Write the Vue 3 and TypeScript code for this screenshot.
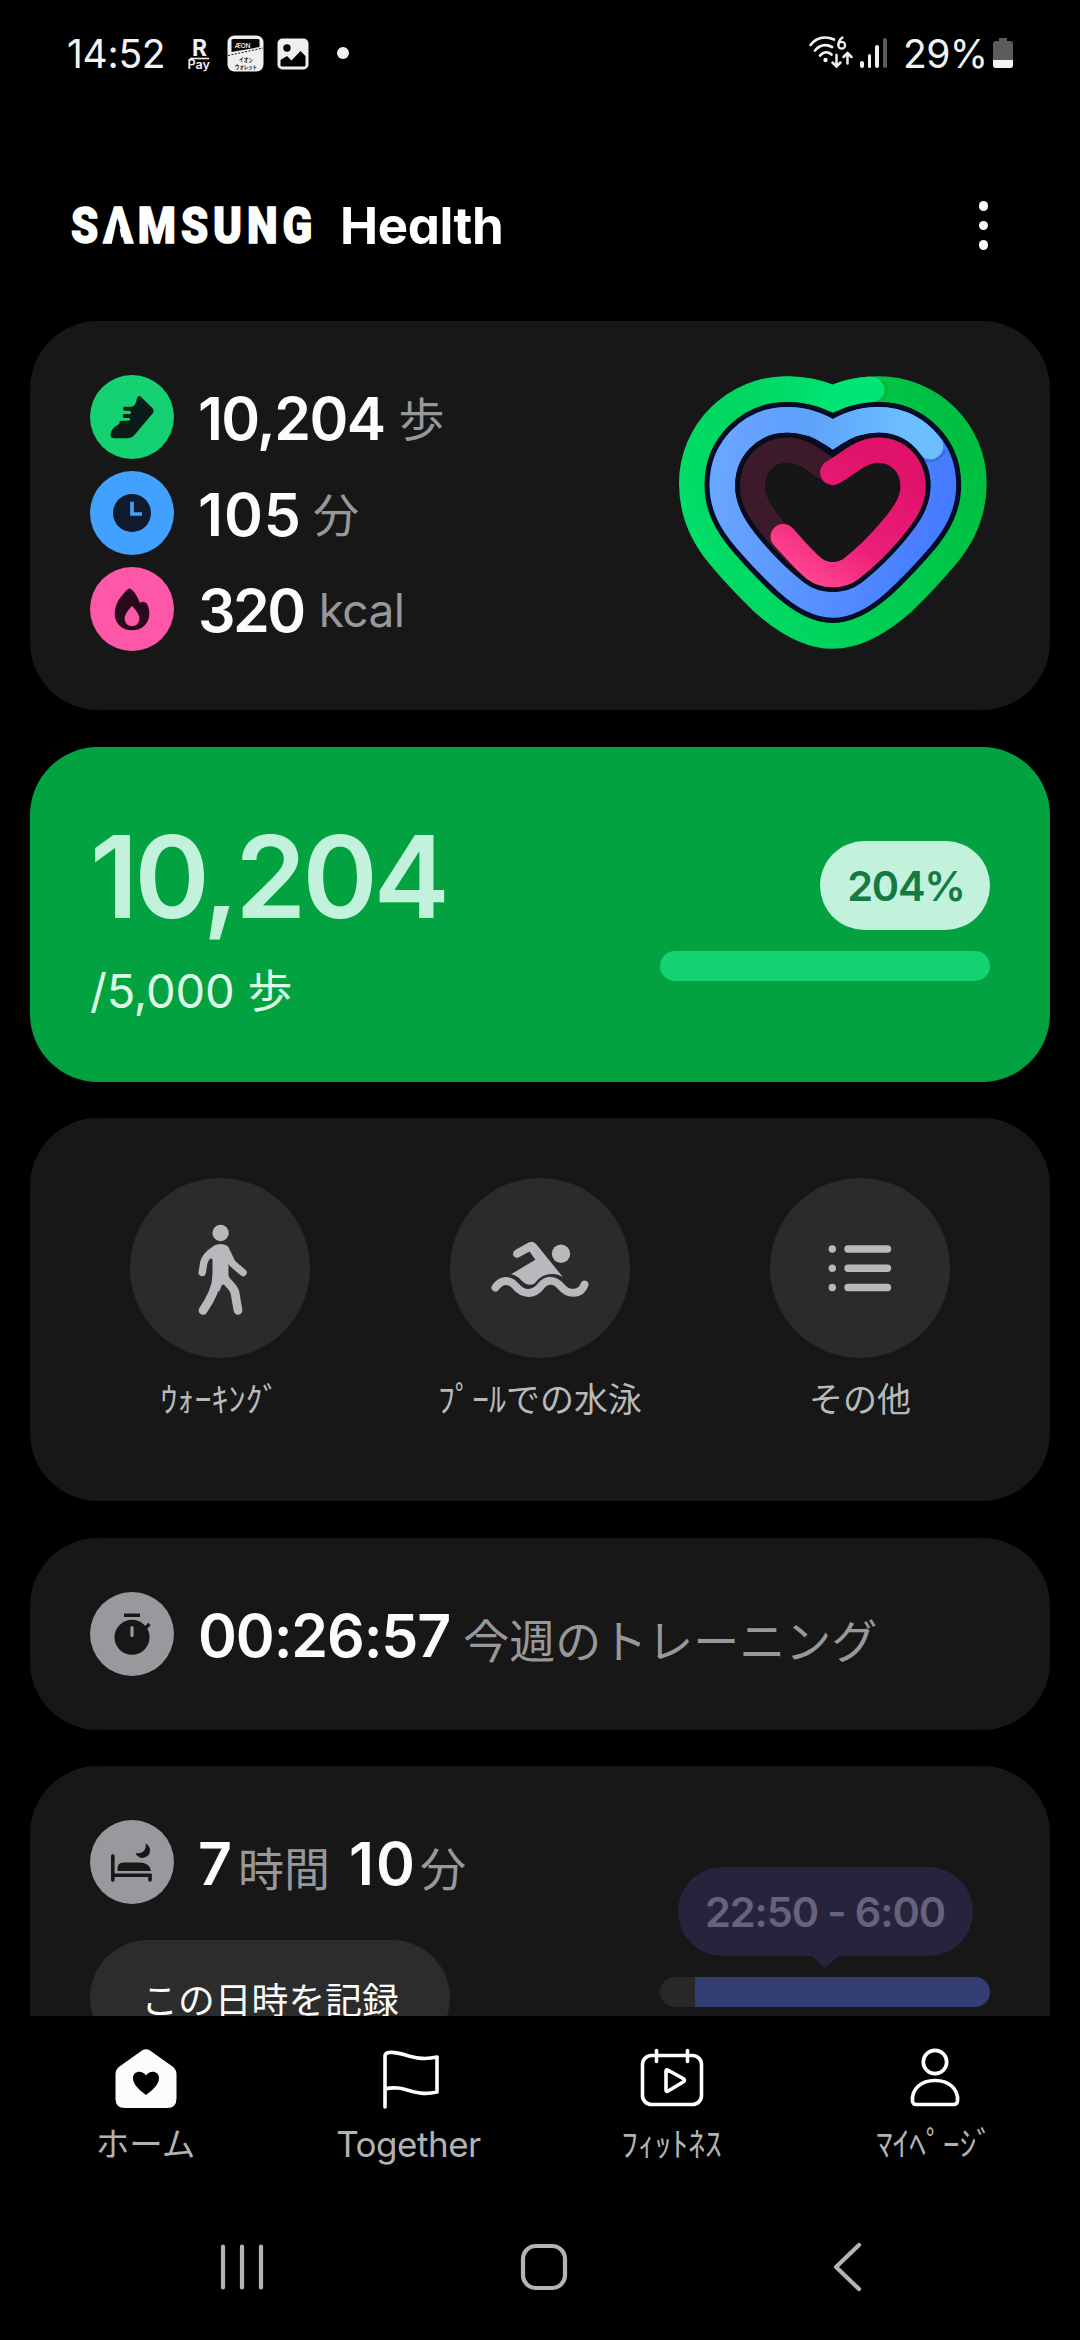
<script setup lang="ts">
interface Stat {
  kind: 'steps' | 'time' | 'energy'
  value: string
  unit: string
}

interface Item {
  kind: string
  label: string
}

const stats: Stat[] = [
  { kind: 'steps', value: '10,204', unit: '歩' },
  { kind: 'time', value: '105', unit: '分' },
  { kind: 'energy', value: '320', unit: 'kcal' },
]

const exercises: Item[] = [
  { kind: 'walk', label: 'ｳｫｰｷﾝｸﾞ' },
  { kind: 'swim', label: 'ﾌﾟｰﾙでの水泳' },
  { kind: 'more', label: 'その他' },
]

const tabs: Item[] = [
  { kind: 'home', label: 'ホーム' },
  { kind: 'together', label: 'Together' },
  { kind: 'fitness', label: 'ﾌｨｯﾄﾈｽ' },
  { kind: 'me', label: 'ﾏｲﾍﾟｰｼﾞ' },
]

const signalBars: number[] = [7, 14, 23, 30]

const greenPath =
  'M547 175 C590 157 634 147 684 147 C844 147 970 275 970 430 C970 510 939 585 889 645 C850 692 805 740 759 785 C684 852 614 888 547 888 C480 888 410 852 335 785 C289 740 244 692 205 645 C155 585 124 510 124 430 C124 275 250 147 410 147 C460 147 504 157 547 175 Z'
const bluePath =
  'M547 282 C587 255 634 239 684 239 C792 239 879 325 879 435 C879 500 849 550 809 597 C764 650 724 690 684 727 C639 768 594 795 547 795 C500 795 455 768 410 727 C370 690 330 650 285 597 C245 550 215 500 215 435 C215 325 302 239 410 239 C460 239 507 255 547 282 Z'
const pinkTrack =
  'M547 397 C575 381 598 363 625 347 C645 336 662 330 684 330 C745 330 788 378 788 440 C788 485 760 525 722 570 C684 615 640 657 602 687 C578 705 560 704 547 704 C534 704 516 705 492 687 C454 657 410 615 372 570 C334 525 306 485 306 440 C306 378 349 330 410 330 C432 330 449 336 469 347 C496 363 519 381 547 397 Z'
const pinkArc =
  'M547 397 C575 381 598 363 625 347 C645 336 662 330 684 330 C745 330 788 378 788 440 C788 485 760 525 722 570 C684 615 640 657 602 687 C578 705 560 704 547 704 C534 704 516 705 492 687 C460 661 430 624 398 590'
</script>

<template>
  <div class="screen">
    <header class="status">
      <span class="clock">14:52</span>
      <svg class="ic-pay" width="26" height="36" viewBox="0 0 26 36">
        <text x="6" y="18.5" class="pay-r" textLength="15" lengthAdjust="spacingAndGlyphs">R</text>
        <path d="M4 21.5h19" stroke="#f0f0f0" stroke-width="1.6" />
        <text x="1.4" y="32.4" class="pay-t" textLength="22.5" lengthAdjust="spacingAndGlyphs">Pay</text>
      </svg>
      <svg class="ic-aeon" width="37" height="37" viewBox="0 0 37 37">
        <rect x=".5" y=".5" width="36" height="36" rx="7" fill="#efefef" />
        <path d="M4.5 5.5q0-1.5 1.500-1.500h25q1.500 0 1.500 1.500v6.500l-28 5z" fill="#060606" />
        <path d="M1 20.500 36 13" stroke="#111" stroke-width="1" stroke-dasharray="2 1.500" />
        <text x="7.500" y="12.500" class="aeon-a" textLength="16">ÆON</text>
        <text x="12" y="26.500" class="aeon-b" textLength="14" lengthAdjust="spacingAndGlyphs">イオン</text>
        <text x="8" y="33.500" class="aeon-b" textLength="22" lengthAdjust="spacingAndGlyphs">ウォレット</text>
      </svg>
      <svg class="ic-photo" width="32" height="32" viewBox="0 0 32 32">
        <rect x=".5" y=".5" width="31" height="31" rx="5" fill="#efefef" />
        <circle cx="10" cy="10" r="3.700" fill="#000" />
        <path d="M3.500 27v-5l6.500-4 4.500 4.500L23.500 13l5 5v9q0 1.500-1.500 1.500H5q-1.500 0-1.500-1.500z" fill="#000" />
      </svg>
      <i class="dot"></i>
      <div class="grow"></div>
      <svg class="ic-wifi" width="46" height="36" viewBox="0 0 46 36">
        <g fill="none" stroke="#f0f0f0" stroke-linecap="round" stroke-width="2.700">
          <path d="M2.500 10C9 2 18 1 26 4.500" />
          <path d="M7 15.500C12 9.500 18.500 9 24 12" />
          <path d="M12 20.500c3.500-4 8-4 11.500-1" />
          <path d="M28.500 20v11M24.500 27.500l4 4 4-4M39.500 28.500V18.500M35.500 22l4-4 4 4" stroke-width="2.500" />
          <path d="M34.500 2.500q-4 2.500-4.200 7.500" stroke-width="2.200" />
          <circle cx="33.700" cy="10.300" r="3.400" stroke-width="2.200" />
        </g>
        <circle cx="17.500" cy="25" r="2.200" fill="#f0f0f0" />
      </svg>
      <div class="signal">
        <i v-for="(h, i) in signalBars" :key="h" :class="{ off: i === 3 }" :style="{ height: h + 'px' }"></i>
      </div>
      <span class="pct">29%</span>
      <svg class="ic-batt" width="22" height="32" viewBox="0 0 22 32">
        <path d="M7 1h8v3h3q3 0 3 3v16H1V7q0-3 3-3h3z" fill="#5c5c5c" />
        <path d="M1 23h20v5q0 3-3 3H4q-3 0-3-3z" fill="#f4f4f4" />
      </svg>
    </header>

    <div class="titlebar">
      <h1>
        <span class="brand">S<span class="lambda">A</span>MSUNG</span>
        <span class="product">Health</span>
      </h1>
      <div class="menu"><i></i><i></i><i></i></div>
    </div>

    <main>
      <section class="card activity">
        <div class="stats">
          <div v-for="s in stats" :key="s.kind" class="row" :class="s.kind">
            <svg v-if="s.kind === 'steps'" class="badge" viewBox="180 164 252 252">
              <circle cx="306" cy="290" r="126" fill="#14d271" />
              <path d="M253 354Q242 354 242 344Q243 324 262 315Q270 310 276 303L300 300V262Q318 258 321 234Q325 222 334 231L368 264Q374 271 369 278L316 341Q305 354 292 354Z" fill="#0a1c17" />
              <path d="M285 265h22M284 287h22M274 307h30" stroke="#0a1c17" stroke-width="12" stroke-linecap="round" />
              <path d="M276 277h24M272 297h24" stroke="#14d271" stroke-width="7" stroke-linecap="round" />
            </svg>
            <svg v-else-if="s.kind === 'time'" class="badge" viewBox="180 452 252 252">
              <circle cx="306" cy="578" r="126" fill="#42a0ff" />
              <circle cx="306" cy="578" r="57" fill="#101a2c" />
              <path d="M306 544v37h30" fill="none" stroke="#42a0ff" stroke-width="11" />
            </svg>
            <svg v-else class="badge" viewBox="180 740 252 252">
              <circle cx="306" cy="866" r="126" fill="#ff57a8" />
              <path d="M302 805C312 812 322 826 330 848C336 843 343 843 350 849C356 860 358 870 358 880C358 909 335 930 306 930C277 930 254 909 254 880C254 848 275 824 294 806Q298 803 302 805Z" fill="#280a1c" />
              <path d="M306 857C318 870 328 882 328 895C328 909 318 917 306 917C294 917 284 909 284 895C284 882 294 870 306 857Z" fill="#ff57a8" />
            </svg>
            <span class="value">{{ s.value }}</span>
            <span class="unit">{{ s.unit }}</span>
          </div>
        </div>
        <svg class="heart" viewBox="85 105 925 825">
          <defs>
            <linearGradient id="gGreen" gradientUnits="userSpaceOnUse" x1="124" y1="520" x2="900" y2="220">
              <stop offset="0" stop-color="#00dd68" />
              <stop offset="1" stop-color="#00bf40" />
            </linearGradient>
            <linearGradient id="gGreenHead" gradientUnits="userSpaceOnUse" x1="150" y1="0" x2="560" y2="0">
              <stop offset="0" stop-color="#00e070" stop-opacity="0" />
              <stop offset="1" stop-color="#00e676" />
            </linearGradient>
            <linearGradient id="gBlue" gradientUnits="userSpaceOnUse" x1="215" y1="400" x2="879" y2="520">
              <stop offset="0" stop-color="#68a6ff" />
              <stop offset="1" stop-color="#467bff" />
            </linearGradient>
            <linearGradient id="gBlueHead" gradientUnits="userSpaceOnUse" x1="250" y1="0" x2="760" y2="0">
              <stop offset="0" stop-color="#68a6ff" stop-opacity="0" />
              <stop offset=".45" stop-color="#5da2fb" />
              <stop offset="1" stop-color="#6cbeff" />
            </linearGradient>
            <linearGradient id="gPink" gradientUnits="userSpaceOnUse" x1="680" y1="360" x2="450" y2="690">
              <stop offset="0" stop-color="#e0126a" />
              <stop offset=".6" stop-color="#ec1f78" />
              <stop offset="1" stop-color="#ff438e" />
            </linearGradient>
          </defs>
          <g fill="none" stroke-linejoin="miter">
            <path :d="greenPath" stroke="url(#gGreen)" stroke-width="78" />
            <path d="M150 315C195 214 295 147 410 147C460 147 504 157 547 175C582 160 618 150 661 148" stroke="url(#gGreenHead)" stroke-width="78" stroke-linecap="butt" />
            <path d="M665 113Q712 122 708 150Q708 178 680 186" stroke="#009a38" stroke-width="7" opacity=".45" />
            <path d="M655 148.500L663 148" stroke="#00e676" stroke-width="76" stroke-linecap="round" />
            <path :d="bluePath" stroke="#050d26" stroke-width="107" />
            <path :d="bluePath" stroke="url(#gBlue)" stroke-width="77" />
            <path d="M822 360Q862 372 884 330" stroke="#3a5cc8" stroke-width="9" opacity=".55" />
            <path d="M240 335C272 277 338 239 410 239C460 239 507 255 547 282C587 255 634 239 684 239C746 239 802 267 838 317" stroke="url(#gBlueHead)" stroke-width="77" />
            <path d="M834 312L840 319" stroke="#6cbeff" stroke-width="77" stroke-linecap="round" />
            <path :d="pinkTrack" fill="#161616" stroke="#070b1e" stroke-width="104" stroke-linejoin="round" />
            <path :d="pinkTrack" fill="none" stroke="#3d1a29" stroke-width="76" />
            <path d="M547 441C520 425 490 407 464 390C445 376 430 369 410 369C370 369 345 402 345 440C345 473 370 509 401 545C439 589 480 625 517 656Q547 674 577 656C614 625 655 589 693 545C724 509 749 473 749 440C749 402 724 369 684 369C664 369 649 376 630 390C604 407 574 425 547 441Z" fill="#161616" />
            <path :d="pinkArc" stroke="url(#gPink)" stroke-width="76" stroke-linecap="round" />
          </g>
        </svg>
      </section>

      <section class="card steps-card">
        <div class="goal">
          <span class="big">10,204</span>
          <span class="target">/5,000 <b>歩</b></span>
        </div>
        <div class="progress">
          <span class="pill">204%</span>
          <div class="bar"></div>
        </div>
      </section>

      <section class="card exercise">
        <div v-for="e in exercises" :key="e.kind" class="ex">
          <svg width="180" height="180" viewBox="0 0 180 180">
            <circle cx="90" cy="90" r="90" fill="#2b2b2b" />
            <g v-if="e.kind === 'walk'" fill="#b9b9bd" stroke="#b9b9bd" stroke-linecap="round" stroke-linejoin="round">
              <circle cx="90.600" cy="55" r="8.200" stroke="none" />
              <path d="M82 70C86 64.500 95 64.500 99 70L101 84L98.500 86V99L101 104L92 107L89 114L82.500 104V81L79 80Z" stroke="none" />
              <path d="M86 71C78 76 74.500 81 73.700 85L72.200 94.500" fill="none" stroke-width="7.400" />
              <path d="M95 71C98.500 76 100 83 103 86L113 94.500" fill="none" stroke-width="7.400" />
              <path d="M87 98C86.500 108 83 118 73 132.500" fill="none" stroke-width="8.800" />
              <path d="M94 99C97 106 104 108 105 115L108 132.300" fill="none" stroke-width="8.800" />
            </g>
            <g v-else-if="e.kind === 'swim'" fill="#b9b9bd">
              <circle cx="111" cy="75.700" r="9.200" />
              <path d="M61 96.300L85.400 81.800L79.500 73.600L68.500 79.400Q64 80.500 63 76.500Q62.600 73.600 66 71.600L79 64.300Q83.500 62.500 86.500 66.500L112.800 99Q105 94.500 98.500 97C91 99.500 89 106.700 79.500 106.700C72 106.700 70.500 97.500 61 96.300Z" />
              <path d="M45.500 109.500C52 100.500 60 101.500 66 108.500C73 117 84 117 90.500 108.500C97 100.500 105 101.500 111 108.500C118.500 117.500 131 117 134.500 106.500" fill="none" stroke="#2b2b2b" stroke-width="13" />
              <path d="M45.500 109.500C52 100.500 60 101.500 66 108.500C73 117 84 117 90.500 108.500C97 100.500 105 101.500 111 108.500C118.500 117.500 131 117 134.500 106.500" fill="none" stroke="#b9b9bd" stroke-width="8" stroke-linecap="round" />
            </g>
            <g v-else stroke="#b9b9bd" stroke-width="7.400" stroke-linecap="round">
              <path d="M62.300 71h.01M62.300 90.300h.01M62.300 109.500h.01M78 71h39.500M78 90.300h39.500M78 109.500h39.500" />
            </g>
          </svg>
          <span>{{ e.label }}</span>
        </div>
      </section>

      <section class="card week">
        <svg class="badge" viewBox="0 0 84 84">
          <circle cx="42" cy="42" r="42" fill="#98989d" />
          <circle cx="42" cy="45.300" r="17.500" fill="#171717" />
          <path d="M34 23.200h16M55 36.500l4.500-4.500" stroke="#171717" stroke-width="3.400" />
          <path d="M42 35.500v8" stroke="#98989d" stroke-width="3.200" stroke-linecap="round" />
        </svg>
        <span class="value">00:26:57</span>
        <span class="unit">今週のトレーニング</span>
      </section>

      <section class="card sleep">
        <div class="sleep-left">
          <div class="sleep-row">
            <svg class="badge" viewBox="0 0 84 84">
              <circle cx="42" cy="42" r="42" fill="#98989d" />
              <path d="M22.800 36v24M22.800 55.300h37.500M60 55v5" fill="none" stroke="#171717" stroke-width="3.600" stroke-linecap="round" />
              <path d="M27.500 51v-2.500q0-6 6-6H49q11 0 12 8.500z" fill="#171717" />
              <path d="M55.500 23.500a7.500 7.500 0 1 1-10 9.500c6.500 1.500 11.500-3 10-9.500z" fill="#171717" />
            </svg>
            <span class="value">7</span><span class="unit u1">時間</span>
            <span class="value v2">10</span><span class="unit u2">分</span>
          </div>
          <button type="button">この日時を記録</button>
        </div>
        <div class="range">
          <div class="tip">22:50 - 6:00</div>
          <svg class="arrow" width="26" height="12" viewBox="0 0 26 12"><path d="M0 0H26L15 10.500Q13 12.500 11 10.500Z" fill="#28233c" /></svg>
          <div class="track"><i></i></div>
        </div>
      </section>
    </main>

    <nav class="tabs">
      <div v-for="t in tabs" :key="t.kind" class="tab" :class="t.kind">
        <svg width="68" height="64" viewBox="0 0 68 64">
          <g v-if="t.kind === 'home'">
            <path d="M30 3.500Q34 .8 38 3.500L60.500 19.500Q64.500 22.500 64.500 27V51.500Q64.500 61 55 61H13Q3.500 61 3.500 51.500V27Q3.500 22.500 7.500 19.500Z" fill="#fcfcff" />
            <path d="M34 48C26 42 21 37 21 31C21 24 30 22.500 34 28.500C38 22.500 47 24 47 31C47 37 42 42 34 48Z" fill="#000" />
          </g>
          <g v-else-if="t.kind === 'together'" fill="none" stroke="#fff" stroke-width="3.600" stroke-linecap="round" stroke-linejoin="round">
            <path d="M10 60V9Q10 6 14 5.500C28 3.500 38 15.500 62 10V45C38 50.500 30 37 10 42" />
          </g>
          <g v-else-if="t.kind === 'fitness'" fill="none" stroke="#fff" stroke-width="3.600" stroke-linecap="round" stroke-linejoin="round">
            <rect x="4.500" y="8.500" width="59" height="49" rx="9" />
            <path d="M18.500 3.500v11M49.500 3.500v11" />
            <path d="M28 24.500Q28 22 30.200 23.300L45.500 31.800Q47.500 33.300 45.500 34.800L30.200 44Q28 45.300 28 42.800Z" />
          </g>
          <g v-else fill="none" stroke="#fff" stroke-width="3.700" stroke-linejoin="round">
            <circle cx="34" cy="15" r="11.700" />
            <path d="M11.500 54C10.500 42 20 33.500 34 33.500C48 33.500 57.500 42 56.500 54Q56 57.500 53 57.500H15Q12 57.500 11.500 54Z" />
          </g>
        </svg>
        <span>{{ t.label }}</span>
      </div>
    </nav>

    <footer class="sysnav">
      <svg width="44" height="50" viewBox="0 0 44 50"><path d="M3 4.500v41M22 4.500v41M41 4.500v41" stroke="#b4b4b4" stroke-width="4.200" stroke-linecap="round" /></svg>
      <svg width="50" height="50" viewBox="0 0 50 50"><rect x="4" y="4" width="42" height="42" rx="13" fill="none" stroke="#b4b4b4" stroke-width="4.200" /></svg>
      <svg width="30" height="50" viewBox="0 0 30 50"><path d="M27 3 4 25l23 22" fill="none" stroke="#b4b4b4" stroke-width="4.200" stroke-linecap="round" stroke-linejoin="round" /></svg>
    </footer>
  </div>
</template>

<style>
html,
body {
  background: #000;
}
</style>

<style scoped>
.screen {
  width: 1080px;
  height: 2340px;
  background: #000;
  color: #fff;
  font-family: Inter, 'Noto Sans CJK JP', sans-serif;
  display: flex;
  flex-direction: column;
  overflow: hidden;
}
.screen > * {
  flex: none;
  box-sizing: border-box;
}
svg {
  display: block;
  flex: none;
}
span {
  white-space: nowrap;
}

.status {
  height: 106px;
  padding: 0 66px 0 67px;
  display: flex;
  align-items: center;
  color: #f2f2f2;
}
.clock {
  width: 119px;
  font-size: 39px;
  letter-spacing: -0.3px;
}
.ic-pay {
  margin-top: 4px;
  overflow: visible;
}
.pay-r {
  font: 700 23px Inter, sans-serif;
  fill: #f0f0f0;
}
.pay-t {
  font: 600 12.5px Inter, sans-serif;
  fill: #f0f0f0;
}
.aeon-a {
  font: 500 6.5px Inter, sans-serif;
  fill: #fff;
}
.aeon-b {
  font: 700 6px 'Noto Sans CJK JP', sans-serif;
  fill: #222;
}
.ic-aeon {
  margin-left: 15px;
}
.ic-photo {
  margin-left: 13px;
  margin-top: 1px;
}
.dot {
  width: 12px;
  height: 12px;
  border-radius: 50%;
  background: #f2f2f2;
  margin-left: 28px;
}
.grow {
  flex: 1;
}
.signal {
  height: 30px;
  margin-left: 6px;
  display: flex;
  align-items: flex-end;
  gap: 4px;
}
.signal i {
  width: 3.8px;
  border-radius: 2px;
  background: #f2f2f2;
}
.signal i.off {
  background: #5c5c5c;
}
.pct {
  margin-left: 16px;
  width: 89px;
  font-size: 39px;
  letter-spacing: -0.6px;
}

.titlebar {
  height: 215px;
  padding: 24px 92px 0 71px;
  display: flex;
  align-items: flex-start;
  justify-content: space-between;
}
h1 {
  margin: 66px 0 0;
  height: 60px;
  display: flex;
  align-items: center;
  font-size: 51px;
  line-height: 60px;
}
.brand {
  width: 269px;
  font-family: Roboto, sans-serif;
  font-weight: 900;
  font-size: 49.5px;
  letter-spacing: 5.6px;
  transform: scaleX(0.88);
  transform-origin: 0 50%;
  -webkit-text-stroke: 1.4px #fff;
}
.lambda {
  display: inline-block;
  position: relative;
}
.lambda::after {
  content: '';
  position: absolute;
  left: 9.5px;
  bottom: 11px;
  width: 13px;
  height: 27px;
  background: #000;
  clip-path: polygon(50% 0, 100% 100%, 0 100%);
}
.product {
  font-weight: 650;
  letter-spacing: -0.4px;
  font-feature-settings: 'cv11';
}
.menu {
  display: flex;
  flex-direction: column;
  gap: 10px;
  margin-top: 71px;
}
.menu i {
  width: 9.5px;
  height: 9.5px;
  border-radius: 50%;
  background: #fafafa;
}

main {
  height: 1695px;
  padding: 0 30px;
  display: flex;
  flex-direction: column;
  gap: 36.5px;
  overflow: hidden;
}
.card {
  flex: none;
  box-sizing: border-box;
  background: #171717;
  border-radius: 68px;
  display: flex;
}
.badge {
  width: 84px;
  height: 84px;
}
.value {
  font-size: 59px;
  line-height: 84px;
  font-weight: 600;
  color: #fcfcff;
  letter-spacing: -2px;
}
.unit {
  font-size: 46px;
  line-height: 84px;
  color: #98989c;
  font-weight: 400;
}

.activity {
  height: 389px;
  padding: 54px 63px 0 60px;
  justify-content: space-between;
}
.stats {
  display: flex;
  flex-direction: column;
  gap: 12px;
}
.row {
  height: 84px;
  display: flex;
  align-items: center;
}
.row .value {
  margin-left: 24px;
  padding-top: 3px;
}
.row .unit {
  margin-left: 14px;
  padding-top: 4px;
}
.steps .value {
  letter-spacing: -1.6px;
}
.time .value {
  letter-spacing: 1px;
}
.row.time .unit {
  margin-left: 11px;
}
.energy .value {
  letter-spacing: -2.5px;
}
.row.energy .unit {
  letter-spacing: -0.6px;
  margin-left: 15px;
  padding-top: 2px;
}
.heart {
  width: 308px;
  height: 275px;
}

.steps-card {
  height: 335px;
  padding: 0 60px;
  background: #03a241;
  justify-content: space-between;
}
.goal {
  display: flex;
  flex-direction: column;
}
.big {
  margin: 70px 0 0 0;
  font-size: 114px;
  line-height: 120px;
  font-weight: 600;
  letter-spacing: -3.8px;
  color: #c3f2dc;
}
.target {
  margin-top: 24px;
  font-size: 47px;
  line-height: 60px;
  letter-spacing: -0.2px;
  color: #dcfce6;
}
.target b {
  font-size: 45px;
  font-weight: 400;
}
.progress {
  padding-top: 94px;
  display: flex;
  flex-direction: column;
  align-items: flex-end;
  gap: 21px;
}
.pill {
  box-sizing: border-box;
  width: 170px;
  height: 89px;
  padding-left: 2px;
  border-radius: 45px;
  background: #c3f2dc;
  color: #137a45;
  font-size: 41.5px;
  line-height: 91px;
  font-weight: 600;
  text-align: center;
  letter-spacing: -1.3px;
}
.bar {
  width: 330px;
  height: 30px;
  border-radius: 15px;
  background: #14d271;
}

.exercise {
  height: 383px;
  padding: 60px 30px 0;
}
.ex {
  width: 320px;
  display: flex;
  flex-direction: column;
  align-items: center;
}
.ex span {
  margin-top: 18px;
  font-size: 34px;
  line-height: 48px;
  color: #b9b9bd;
}

.week {
  height: 192px;
  padding: 54px 60px 0;
}
.week .value {
  margin-left: 24px;
  padding-top: 2px;
  letter-spacing: -1.1px;
}
.week .unit {
  margin-left: 13px;
  padding-top: 7px;
}

.sleep {
  height: 340px;
  padding: 54px 60px 0;
  justify-content: space-between;
}
.sleep-left {
  display: flex;
  flex-direction: column;
  align-items: flex-start;
}
.sleep-row {
  height: 84px;
  display: flex;
}
.sleep-row .value {
  margin-left: 24px;
  padding-top: 2px;
}
.sleep-row .unit {
  margin-left: 8px;
  padding-top: 7px;
}
.sleep-row .value.v2 {
  margin-left: 19px;
  letter-spacing: 2px;
}
.sleep-row .unit.u2 {
  margin-left: 3px;
}
button {
  margin-top: 36px;
  width: 360px;
  height: 116px;
  border: 0;
  border-radius: 58px;
  background: #2c2c2c;
  color: #fcfcfc;
  font: 400 36.8px/116px 'Noto Sans CJK JP', sans-serif;
  padding: 0;
}
.range {
  width: 330px;
  padding-top: 47px;
  display: flex;
  flex-direction: column;
  align-items: center;
}
.tip {
  width: 295px;
  height: 89px;
  border-radius: 45px;
  background: #28233c;
  color: #67627c;
  font-size: 41.5px;
  line-height: 91px;
  font-weight: 600;
  text-align: center;
  letter-spacing: -1.1px;
  white-space: nowrap;
}
.track {
  width: 330px;
  height: 30px;
  margin-top: 9px;
  border-radius: 15px;
  background: #282828;
  overflow: hidden;
  display: flex;
  justify-content: flex-end;
}
.track i {
  width: 295px;
  background: #353e72;
}

.tabs {
  height: 184px;
  padding: 31px 14px 0;
  display: flex;
}
.tab {
  flex: 1;
  display: flex;
  flex-direction: column;
  align-items: center;
}
.tab span {
  margin-top: 9px;
  font-size: 33.5px;
  line-height: 48px;
  color: #b2b2b4;
}
.tab.together span {
  font-size: 35px;
  letter-spacing: -0.5px;
}

.sysnav {
  height: 140px;
  padding: 42px 0 0 220px;
  display: flex;
}
.sysnav svg:nth-child(2) {
  margin-left: 255px;
}
.sysnav svg:nth-child(3) {
  margin-left: 263px;
}
</style>
